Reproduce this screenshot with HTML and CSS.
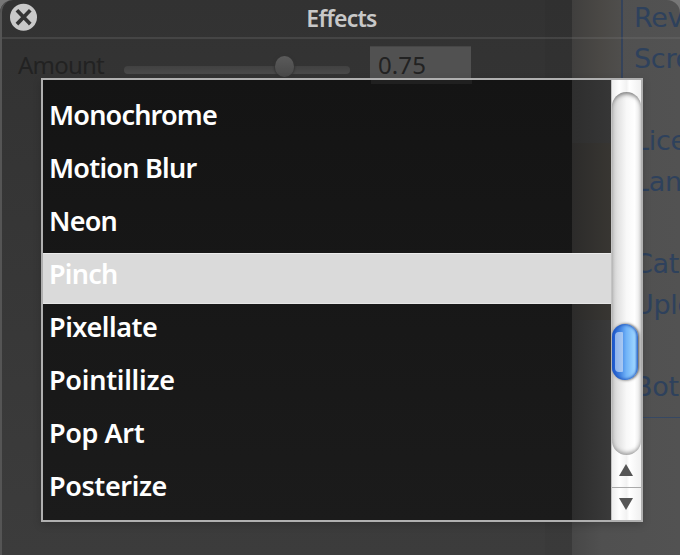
FILE: index.html
```html
<!DOCTYPE html>
<html lang="en">
<head>
<meta charset="utf-8">
<title>Effects</title>
<link rel="stylesheet" href="styles.css">
</head>
<body>
<div class="stage">
  <div class="desktop">
    <div class="wall"></div>
    <div class="page">
      <div class="links">
        <span>Rev</span><span>Scro</span><span></span><span>Lice</span><span>Lan</span><span></span><span>Cat</span><span>Uplo</span><span></span><span>Bot</span>
      </div>
    </div>
  </div>
  <section class="panel">
    <header class="titlebar">
      <svg class="close" width="28" height="28" viewBox="0 0 28 28"><circle cx="13.5" cy="14.3" r="13.5" fill="#c9c9c9"/><path d="M8.2 8.5 19 19.8M19 8.5 8.2 19.8" stroke="#353535" stroke-width="3.7" stroke-linecap="square"/></svg>
      <h1>Effects</h1>
    </header>
    <div class="controls">
      <label>Amount</label>
      <div class="slider"><i class="knob"></i></div>
      <div class="value">0.75</div>
    </div>
  </section>
  <div class="popup">
    <ul class="list">
      <li><span class="n1">Monochrome</span></li>
      <li><span class="n2">Motion Blur</span></li>
      <li><span class="n3">Neon</span></li>
      <li class="selected"><span class="n4">Pinch</span></li>
      <li><span class="n5">Pixellate</span></li>
      <li><span class="n6">Pointillize</span></li>
      <li><span class="n7">Pop Art</span></li>
      <li><span class="n8">Posterize</span></li>
    </ul>
    <div class="scrollbar">
      <div class="cap"></div>
      <div class="track"><i class="thumb"><i class="shine"></i></i></div>
      <div class="arrow"><svg width="14" height="12" viewBox="0 0 14 12"><path d="M7 0 14 12H0Z" fill="#555"/></svg></div>
      <div class="arrow down"><svg width="14" height="12" viewBox="0 0 14 12"><path d="M0 0H14L7 12Z" fill="#555"/></svg></div>
    </div>
  </div>
</div>
</body>
</html>
```
FILE: styles.css
```css
* { box-sizing: border-box; }
body { margin: 0; overflow: hidden; }
.stage {
  position: relative;
  display: grid;
  width: 680px;
  height: 555px;
  background: #777;
  font-family: "Noto Sans", "Open Sans", sans-serif;
}
.desktop, .panel { grid-area: 1 / 1; }
.desktop {
  display: grid;
  grid-template-columns: 572px 108px;
  border-radius: 13px 13px 0 0;
  overflow: hidden;
  height: 555px;
}
.wall { background: linear-gradient(90deg, transparent 545px, rgba(0,0,0,.04) 545px), linear-gradient(#323232, #3c3c3c); }
.page {
  padding-left: 49px;
  background:
    linear-gradient(90deg, #403f3e, #4a4845 28px, #4f4e4c 49px, transparent 50px) 0 0 / 100% 130px no-repeat,
    linear-gradient(90deg, #474747, #505050 30px, #525252);
}
.links {
  display: flex;
  flex-direction: column;
  height: 418px;
  border-left: 2px solid #35435a;
  border-bottom: 1px solid #364863;
  padding-left: 11px;
  white-space: nowrap;
  font: 27px/41px Verdana, "DejaVu Sans", sans-serif;
  letter-spacing: -.3px;
  color: #2e415c;
}
.links span { flex: 0 0 40.9px; }
.links span:first-child { margin-top: -3px; }
.panel {
  height: 555px;
  border-left: 2px solid #555;
  border-radius: 13px 13px 0 0;
}
.titlebar {
  display: grid;
  grid-template-columns: 28px 1fr 36px;
  height: 39px;
  padding: 3px 0 0 8px;
  border-bottom: 2px solid rgba(120,120,120,.28);
}
.titlebar h1 {
  margin: 0 0 0 1px;
  padding-top: 1px;
  text-align: center;
  font: 600 23px/29px "Noto Sans", sans-serif;
  letter-spacing: -.75px;
  color: #c8c8c8;
}
.controls {
  display: flex;
  height: 46px;
  padding: 7px 0 0 16px;
  color: #222;
  font-size: 24px;
  line-height: 37px;
}
.controls label { width: 106px; letter-spacing: -.8px; }
.slider {
  display: flex;
  width: 226px;
  height: 8px;
  margin-top: 20px;
  border-radius: 4px;
  background: linear-gradient(#414141, #4a4a4a);
}
.knob {
  width: 19px;
  height: 21px;
  margin: -10px 0 0 151px;
  border-radius: 50%;
  background: linear-gradient(#5b5b5b, #484848);
  box-shadow: 0 0 2px 1px #333;
}
.value {
  width: 101px;
  height: 37px;
  margin-left: 20px;
  padding-left: 8px;
  background: #515151;
  border-top: 1px solid #464646;
  line-height: 36px;
  letter-spacing: .1px;
}
.popup {
  position: absolute;
  left: 41px;
  top: 78px;
  width: 602px;
  height: 444px;
  display: grid;
  grid-template-columns: 568px 30px;
  border: 2px solid #b0b0b0;
  box-shadow: 0 3px 8px rgba(0,0,0,.18);
}
.list {
  margin: 0;
  padding: 14px 0 0;
  list-style: none;
  background:
    linear-gradient(#202020, #202020) 328px 0 / 101px 4px no-repeat,
    linear-gradient(90deg, #2e2e2e, #363636) 529px 0 / 39px 63px no-repeat,
    linear-gradient(90deg, #2c2b2a, #383632) 529px 63px / 39px 177px no-repeat,
    linear-gradient(90deg, #2c2c2c, #3a3a3a) 529px 240px / 39px 200px no-repeat,
    linear-gradient(#141414, #1b1b1b);
}
.list li {
  height: 53px;
  padding-left: 6px;
  font: 600 27px/42px "Noto Sans", sans-serif;
  color: #fff;
  white-space: nowrap;
}
.list .selected {
  height: 51px;
  border-top: 1px solid #ececec;
  border-bottom: 1px solid #e6e6e6;
  margin-bottom: 2px;
  background: #dadada;
  line-height: 40px;
}
.n1 { letter-spacing: -.8px; }
.n2, .n3, .n4 { letter-spacing: -.75px; }
.n5 { letter-spacing: -.45px; }
.n6 { letter-spacing: -.25px; }
.n7, .n8 { letter-spacing: -.4px; }
.scrollbar {
  display: flex;
  flex-direction: column;
  border-left: 1px solid #c4c4c4;
  background: linear-gradient(90deg, #eee, #fff 25%, #f2f2f2 50%, #fff 60%, #f0f0f0);
}
.cap { height: 12px; }
.track {
  height: 363px;
  border-radius: 15px;
  background: linear-gradient(90deg, #c9c9c9, #e0e0e0 18%, #f8f8f8 50%, #fff 78%, #e4e4e4);
  box-shadow: inset 0 4px 4px -2px #777, inset 0 -4px 4px -2px #999;
}
.thumb {
  display: block;
  width: 26px;
  height: 56px;
  margin: 232px 0 0;
  padding: 8px 3px;
  border-radius: 13px;
  background: linear-gradient(90deg, #1752cf, #3f80df 30%, #70b3f8 55%, #9ed6ff 88%, #5a9ae5);
  box-shadow: inset 0 0 3px 1px #2459bd, 1px 0 3px #444;
}
.shine {
  display: block;
  width: 8px;
  height: 40px;
  border-radius: 4px 1px 1px 4px;
  background: linear-gradient(90deg, #8fb4ec, #a8c8f2);
}
.arrow {
  display: flex;
  justify-content: center;
  height: 32px;
  padding: 9px 1px 0 0;
}
.arrow.down { height: 33px; border-top: 1px solid #aaa; padding-top: 10px; }
```
